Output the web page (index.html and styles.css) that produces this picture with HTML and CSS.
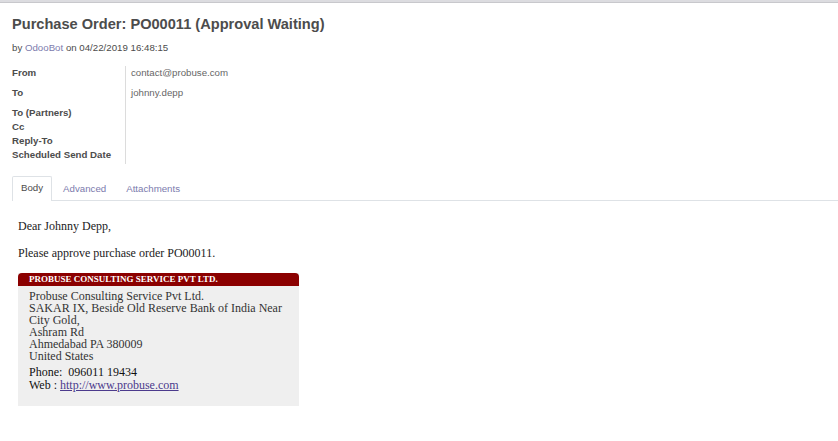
FILE: index.html
```html
<!DOCTYPE html>
<html>
<head>
<meta charset="utf-8">
<link rel="stylesheet" href="styles.css">
</head>
<body>
<div class="topbar"></div>
<div class="sheet">
  <h1 class="title">Purchase Order: PO00011 (Approval Waiting)</h1>
  <div class="byline">by <a class="author">OdooBot</a> on 04/22/2019 16:48:15</div>
  <div class="fields">
    <div class="labels">
      <div class="label gap">From</div>
      <div class="label gap">To</div>
      <div class="label">To (Partners)</div>
      <div class="label">Cc</div>
      <div class="label">Reply-To</div>
      <div class="label">Scheduled Send Date</div>
    </div>
    <div class="values">
      <div class="value gap">contact@probuse.com</div>
      <div class="value gap">johnny.depp</div>
    </div>
  </div>
  <div class="tabs">
    <div class="tab active">Body</div>
    <div class="tab">Advanced</div>
    <div class="tab">Attachments</div>
  </div>
  <div class="mailbody">
    <p class="para">Dear Johnny Depp,</p>
    <p class="para">Please approve purchase order PO00011.</p>
    <div class="sig">
      <div class="sighead">PROBUSE CONSULTING SERVICE PVT LTD.</div>
      <div class="sigbody">
        <div class="addr">Probuse Consulting Service Pvt Ltd.<br>SAKAR IX, Beside Old Reserve Bank of India Near City Gold,<br>Ashram Rd<br>Ahmedabad PA 380009<br>United States</div>
        <div class="contact">Phone:&nbsp; 096011 19434<br>Web : <a class="link">http://www.probuse.com</a></div>
      </div>
    </div>
  </div>
</div>
</body>
</html>
```
FILE: styles.css
```css
html, body {
  margin: 0;
  padding: 0;
  background: #fff;
}
body {
  font-family: "Liberation Sans", Arial, sans-serif;
  color: #4c4c4c;
}
.topbar {
  height: 2px;
  background: #dcdce0;
  border-bottom: 1px solid #c8c8cc;
}
.sheet {
  padding: 0 0 0 12px;
}
.title {
  margin: 0;
  padding-top: 11px;
  font-size: 14.6px;
  line-height: 20px;
  font-weight: bold;
  color: #4c4c4c;
}
.byline {
  margin-top: 8px;
  font-size: 9.7px;
  line-height: 12px;
  color: #4c4c4c;
}
.author {
  color: #7c7bad;
}
.fields {
  display: flex;
  margin-top: 12px;
}
.labels {
  width: 113px;
  border-right: 1px solid #dcdcdc;
  padding-bottom: 2px;
}
.label {
  font-size: 9.7px;
  font-weight: bold;
  line-height: 14px;
  color: #4c4c4c;
}
.value {
  font-size: 9.7px;
  line-height: 14px;
  color: #666;
  padding-left: 5px;
}
.gap {
  margin-bottom: 6px;
}
.tabs {
  display: flex;
  margin-top: 12px;
  border-bottom: 1px solid #dee2e6;
  align-items: flex-end;
}
.tab {
  font-size: 9.7px;
  line-height: 12px;
  padding: 5px 8px 6px 8px;
  color: #7c7bad;
  border: 1px solid transparent;
  border-bottom: none;
  margin-right: 2px;
  margin-bottom: -1px;
  border-radius: 2px 2px 0 0;
}
.tab.active {
  color: #4c4c4c;
  border-color: #dee2e6;
  background: #fff;
  padding-bottom: 7px;
}
.mailbody {
  padding: 18px 0 0 6px;
  font-family: "Liberation Serif", "Times New Roman", serif;
  color: #222;
  font-size: 12px;
}
.para {
  margin: 0 0 13px 0;
  line-height: 14px;
}
.sig {
  width: 281px;
  background: #efefef;
}
.sighead {
  background: #8b0000;
  color: #fff;
  font-weight: bold;
  font-size: 9px;
  line-height: 13px;
  padding-left: 11px;
  border-radius: 4px 4px 0 0;
}
.sigbody {
  padding: 4px 10px 14px 11px;
  color: #333;
}
.addr {
  line-height: 12px;
}
.contact {
  margin-top: 4px;
  line-height: 13px;
  color: #111;
}
.link {
  color: #4b3a8c;
  text-decoration: underline;
}
```
